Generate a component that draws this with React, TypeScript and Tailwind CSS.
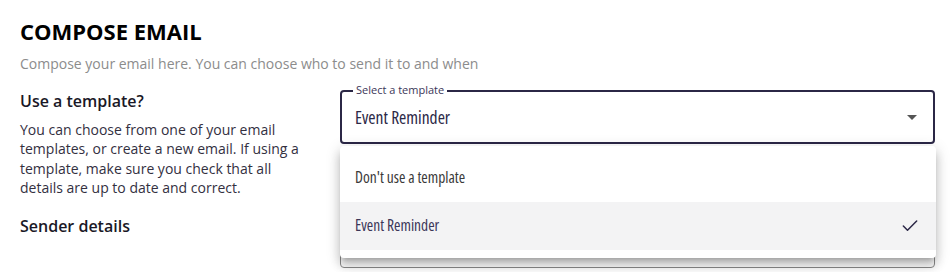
import { Check } from "lucide-react"

const font = { fontFamily: '"Open Sans", "Noto Sans", sans-serif' }

function TemplateSelect() {
  return (
    <div className="relative">
      <div className="relative h-[54px] rounded-[4px] border-2 border-[#2b2746] flex items-center pl-[13px] pr-[14px]">
        <span className="absolute -top-[9px] left-[11px] bg-white px-[3px] text-[11px] leading-[14px] text-[#3b3658]">
          Select a template
        </span>
        <span className="flex-1 text-[17.5px] text-[#2b2746] font-stretch-condensed mt-[1px]">Event Reminder</span>
        <svg width="10" height="5" viewBox="0 0 10 5" className="mr-[2px]">
          <path d="M0 0h10L5 5z" fill="#555" />
        </svg>
      </div>

      {/* field hidden behind the open menu */}
      <div className="mt-[68px] h-[56px] rounded-[4px] border border-[#8a8a8a]" />

      <div className="absolute left-0 right-[-1px] top-[56px] bg-white rounded-[4px] py-2 shadow-[0_5px_5px_-3px_rgba(0,0,0,0.2),0_8px_10px_1px_rgba(0,0,0,0.14),0_3px_14px_2px_rgba(0,0,0,0.12)]">
        <div className="h-12 flex items-center px-[15px] text-[15.5px] text-[#3a3a3a] font-stretch-condensed">
          Don't use a template
        </div>
        <div className="h-12 flex items-center px-[15px] bg-[#f3f3f4] text-[15.5px] text-[#3b3658] font-stretch-condensed">
          <span className="flex-1">Event Reminder</span>
          <Check className="w-[20px] h-[20px] text-[#2b2746] mr-[1px]" strokeWidth={1.8} />
        </div>
      </div>
    </div>
  )
}

export default function App() {
  return (
    <div className="bg-white h-[272px] overflow-hidden pl-[20px] pr-[15px] pt-[16px]" style={font}>
      <h1 className="text-[22px] leading-[30px] font-bold text-black">COMPOSE EMAIL</h1>
      <p className="mt-[8px] text-[14px] leading-[20px] text-[#8c8c8c]">
        Compose your email here. You can choose who to send it to and when
      </p>

      <div className="mt-[15px] flex">
        <div className="w-[300px] shrink-0">
          <h2 className="text-[16px] leading-[24px] font-semibold text-[#1a1826]">Use a template?</h2>
          <p className="mt-[7px] w-[290px] text-[14px] leading-[19.4px] text-[#33303f]">
            You can choose from one of your email templates, or create a new email. If using a template, make sure you
            check that all details are up to date and correct.
          </p>
          <h2 className="mt-[16px] text-[16px] leading-[24px] font-semibold text-[#1a1826]">Sender details</h2>
        </div>
        <div className="ml-[20px] flex-1 pt-[1px]">
          <TemplateSelect />
        </div>
      </div>
    </div>
  )
}
